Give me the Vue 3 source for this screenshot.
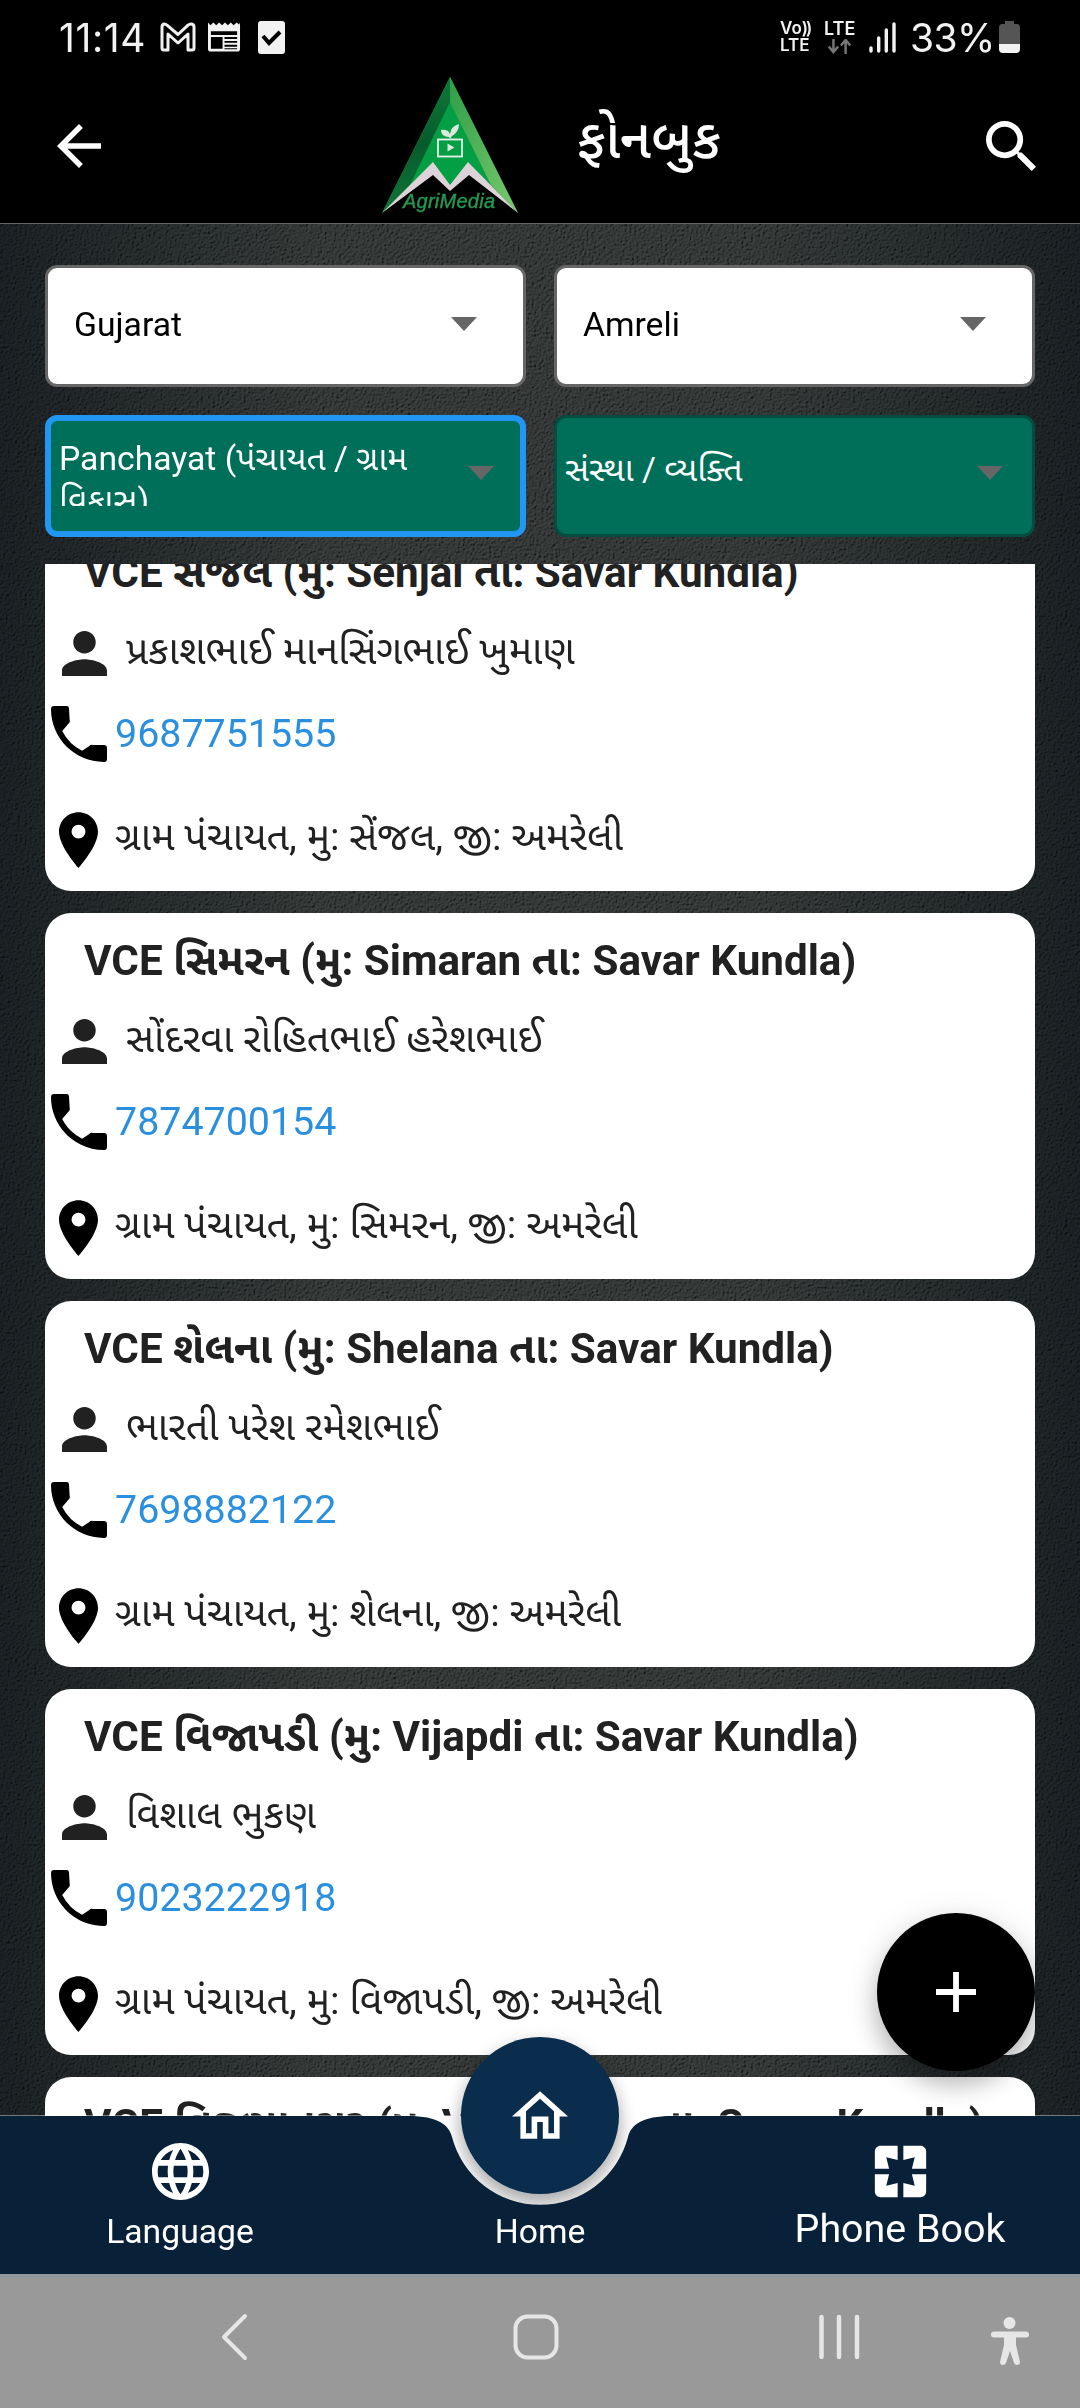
<template>
  <div class="screen">
    <header class="top">
      <div class="status">
        <span class="clock">11:14</span>
        <svg class="st-mail" viewBox="0 0 36 30"><path d="M2 4v22q0 2 2 2h4V12l10 9 10-9v16h4q2 0 2-2V5q0-3-3-3-1.500 0-3 1.200L18 12.500 7 3.200Q5.500 2 4.500 2 2 2 2 5" fill="none" stroke="#f2f2f2" stroke-width="3" stroke-linejoin="round" /></svg>
        <svg class="st-cal" viewBox="0 0 34 30"><path fill-rule="evenodd" fill="#f2f2f2" d="M0 0l2.500 3 3-3 3 3 3-3 3 3 3-3 3 3 3-3 3 3 3-3 2.500 2L33 0v27q0 3-3 3H3q-3 0-3-3zM3 9v4h27V9zM3 15v12h12V15zM17 15v2h13v-2zM17 19v2h13v-2zM17 23v2h13v-2zM17 26.500v1h13v-1z" /></svg>
        <svg class="st-check" viewBox="0 0 27 33"><rect width="27" height="33" rx="3" fill="#f2f2f2" /><path d="M5 15l6 7L22 11" fill="none" stroke="#000" stroke-width="4" /></svg>
        <div class="volte"><span>Vo<i>))</i></span><span>LTE</span></div>
        <div class="lte">
          <span>LTE</span>
          <svg viewBox="0 0 26 16"><path d="M6 0v13M1 8l5 6 5-6M19 16V2M14 7l5-6 5 6" fill="none" stroke="#777" stroke-width="2.600" /></svg>
        </div>
        <svg class="signal" viewBox="0 0 28 31"><path d="M2 26v3M9.700 16v13M17.300 8v21M25 2v27" stroke="#f2f2f2" stroke-width="3.400" stroke-linecap="round" /></svg>
        <span class="percent">33%</span>
        <svg class="battery" viewBox="0 0 21 32"><path d="M6 0h9v3h3q3 0 3 4v16H0V7q0-4 3-4h3z" fill="#555" /><path d="M0 23h21v5q0 4-4 4H4q-4 0-4-4z" fill="#f2f2f2" /></svg>
      </div>
      <div class="appbar">
        <svg class="back" viewBox="4 4 16 16"><path d="M20 11H7.830l5.590-5.590L12 4l-8 8 8 8 1.410-1.410L7.830 13H20v-2z" fill="#fff" /></svg>
        <svg class="logo" viewBox="0 0 136 136">
          <defs>
            <linearGradient id="leftFace" x1="0" y1="0" x2="0" y2="1"><stop offset="0" stop-color="#0c7a37" /><stop offset=".5" stop-color="#075b2b" /><stop offset="1" stop-color="#11763a" /></linearGradient>
            <linearGradient id="rightFace" x1="0" y1="0" x2="1" y2="1"><stop offset="0" stop-color="#2e9e48" /><stop offset="1" stop-color="#7cc96c" /></linearGradient>
          </defs>
          <path d="M68 0L0 136 51 86 68 110 86 86 136 136z" fill="#049f45" />
          <path d="M68 0L0 136 28 108 68 25z" fill="url(#leftFace)" />
          <path d="M68 0l68 136-27-28L68 25z" fill="url(#rightFace)" />
          <path d="M0 136L51 85l17 23 18-23 50 51-49-38-19 16-17-16z" fill="#ded3d8" />
          <rect x="56" y="62.500" width="24" height="17" fill="none" stroke="#e5f2e8" stroke-width="1.800" />
          <path d="M65.500 66.500v8l7-4zM67 60q-8 0-8-7 7-1 9 4 1-8 9-10 0 8-7 12l-2 3z" fill="#dce8dc" />
          <text x="21" y="131" class="logo-text" textLength="92">AgriMedia</text>
        </svg>
        <h1>ફોનબુક</h1>
        <svg class="search" viewBox="3 3 17.500 17.500"><path d="M15.500 14h-.79l-.28-.27A6.471 6.471 0 0 0 16 9.500 6.500 6.500 0 1 0 9.500 16c1.610 0 3.090-.59 4.230-1.570l.27.28v.79l5 4.990L20.490 19l-4.990-5zm-6 0C7.010 14 5 11.990 5 9.500S7.010 5 9.500 5 14 7.010 14 9.500 11.990 14 9.500 14z" fill="#fff" /></svg>
      </div>
    </header>

    <main class="content">
      <svg class="texture">
        <filter id="grain" x="0" y="0" width="100%" height="100%">
          <feTurbulence type="fractalNoise" baseFrequency=".42" numOctaves="3" seed="4" result="n" />
          <feDiffuseLighting in="n" surfaceScale="1.800" lighting-color="#fff"><feDistantLight azimuth="45" elevation="28" /></feDiffuseLighting>
        </filter>
        <rect width="100%" height="100%" filter="url(#grain)" />
      </svg>
      <div class="filters">
        <div v-for="f in filters" :key="f.label" class="select" :class="f.kind">
          <span class="value">{{ f.label }}</span>
          <i class="caret"></i>
        </div>
      </div>

      <section class="list">
        <article v-for="c in contacts" :key="c.title" class="card">
          <h2>{{ c.title }}</h2>
          <template v-if="c.name">
            <div class="row person">
              <svg viewBox="4 4 16 16"><path d="M12 12c2.210 0 4-1.790 4-4s-1.790-4-4-4-4 1.790-4 4 1.790 4 4 4zm0 2c-2.670 0-8 1.340-8 4v2h16v-2c0-2.660-5.330-4-8-4z" fill="#212121" /></svg>
              <span>{{ c.name }}</span>
            </div>
            <div class="row phone">
              <svg viewBox="3 3 18 18"><path d="M8 3H4q-1 0-1 1c0 9.390 7.610 17 17 17q1 0 1-1v-3.500q0-1-1-1h-3.600q-.7-.1-1.200.4L13 17.400A15 15 0 0 1 6.600 11L8.800 8.500q.4-.5.200-1L8.800 4q0-1-.8-1z" fill="#000" /></svg>
              <a>{{ c.phone }}</a>
            </div>
            <div class="row place">
              <svg viewBox="5 2 14 20"><path d="M12 2C8.130 2 5 5.130 5 9c0 5.250 7 13 7 13s7-7.750 7-13c0-3.870-3.130-7-7-7zm0 9.500a2.500 2.500 0 0 1 0-5 2.500 2.500 0 0 1 0 5z" fill="#000" /></svg>
              <span>{{ c.address }}</span>
            </div>
          </template>
        </article>
      </section>

      <button class="fab">
        <svg viewBox="0 0 40 40"><path d="M20 0v40M0 20h40" stroke="#fff" stroke-width="5.800" /></svg>
      </button>
    </main>

    <nav class="tabs">
      <div class="notch"></div>
      <div class="bubble">
        <svg viewBox="2 3 20 17"><path d="M12 5.690l5 4.500V18h-2v-6H9v6H7v-7.810l5-4.500M12 3L2 12h3v8h6v-6h2v6h6v-8h3L12 3z" fill="#fff" /></svg>
      </div>
      <svg class="bar" viewBox="0 0 1080 158"><path d="M0 0H408C438 0 449 9 452 21A91 91 0 0 0 628 21C631 9 642 0 672 0H1080V158H0z" fill="#082138" /></svg>
      <div class="tab">
        <svg viewBox="2 2 20 20"><path d="M11.990 2C6.470 2 2 6.480 2 12s4.470 10 9.990 10C17.520 22 22 17.520 22 12S17.520 2 11.990 2zm6.930 6h-2.950a15.650 15.650 0 0 0-1.380-3.560A8.030 8.030 0 0 1 18.920 8zM12 4.040c.83 1.200 1.480 2.530 1.910 3.960h-3.820c.43-1.430 1.080-2.760 1.910-3.960zM4.260 14C4.100 13.360 4 12.690 4 12s.1-1.360.26-2h3.380c-.08.66-.14 1.320-.14 2s.06 1.340.14 2H4.260zm.82 2h2.950c.32 1.250.78 2.450 1.380 3.560A7.987 7.987 0 0 1 5.080 16zm2.950-8H5.080a7.987 7.987 0 0 1 4.330-3.560A15.650 15.650 0 0 0 8.030 8zM12 19.960c-.83-1.200-1.480-2.530-1.910-3.960h3.820c-.43 1.430-1.080 2.760-1.910 3.960zM14.340 14H9.660c-.09-.66-.16-1.320-.16-2s.07-1.350.16-2h4.680c.09.65.16 1.320.16 2s-.07 1.340-.16 2zm.25 5.560c.6-1.110 1.060-2.310 1.380-3.560h2.950a8.030 8.030 0 0 1-4.330 3.560zM16.360 14c.08-.66.14-1.320.14-2s-.06-1.340-.14-2h3.380c.16.64.26 1.310.26 2s-.1 1.360-.26 2h-3.380z" fill="#fff" /></svg>
        <span>Language</span>
      </div>
      <div class="tab home"><span>Home</span></div>
      <div class="tab active">
        <svg viewBox="2 2 20 20"><path d="M3 5v6h5L7 7l4 1V3H5c-1.100 0-2 .9-2 2zm5 8H3v6c0 1.100.9 2 2 2h6v-5l-4 1 1-4zm9 4l-4-1v5h6c1.100 0 2-.9 2-2v-6h-5l1 4zm2-14h-6v5l4-1-1 4h5V5c0-1.100-.9-2-2-2z" fill="#fff" /></svg>
        <span>Phone Book</span>
      </div>
    </nav>

    <footer class="system">
      <svg viewBox="0 0 1080 135" fill="none" stroke="#e6e6e6" stroke-width="4" stroke-linecap="round" stroke-linejoin="round">
        <path d="M245 43L224 64l21 21" />
        <rect x="515.500" y="43.500" width="41" height="41" rx="12" />
        <path d="M821.500 44v40M839 44v40M857 44v40" stroke-width="4.500" />
        <circle cx="1009.500" cy="50" r="6" fill="#e6e6e6" stroke="none" />
        <path d="M994 61.500h32" stroke-width="6" />
        <path d="M1004 62h12v10l4 17q0 3-3 3-2 0-3-2l-4-12-4 12q-1 2-3 2-3 0-3-3l4-17z" fill="#e6e6e6" stroke="none" />
      </svg>
    </footer>
  </div>
</template>

<script setup>
const filters = [
  { label: 'Gujarat', kind: 'plain' },
  { label: 'Amreli', kind: 'plain' },
  { label: 'Panchayat (પંચાયત / ગ્રામ વિકાસ)', kind: 'green focused' },
  { label: 'સંસ્થા / વ્યક્તિ', kind: 'green' }
]

const contacts = [
  { title: 'VCE સેંજલ (મુ: Senjal તા: Savar Kundla)', name: 'પ્રકાશભાઈ માનસિંગભાઈ ખુમાણ', phone: '9687751555', address: 'ગ્રામ પંચાયત, મુ: સેંજલ, જી: અમરેલી' },
  { title: 'VCE સિમરન (મુ: Simaran તા: Savar Kundla)', name: 'સોંદરવા રોહિતભાઈ હરેશભાઈ', phone: '7874700154', address: 'ગ્રામ પંચાયત, મુ: સિમરન, જી: અમરેલી' },
  { title: 'VCE શેલના (મુ: Shelana તા: Savar Kundla)', name: 'ભારતી પરેશ રમેશભાઈ', phone: '7698882122', address: 'ગ્રામ પંચાયત, મુ: શેલના, જી: અમરેલી' },
  { title: 'VCE વિજાપડી (મુ: Vijapdi તા: Savar Kundla)', name: 'વિશાલ ભુકણ', phone: '9023222918', address: 'ગ્રામ પંચાયત, મુ: વિજાપડી, જી: અમરેલી' },
  { title: 'VCE વિજયાનગર (મુ: Vijyanagar તા: Savar Kundla)' }
]
</script>

<style>
body {
  margin: 0;
  background: #000;
}
</style>

<style scoped>
.screen {
  width: 1080px;
  height: 2408px;
  display: flex;
  flex-direction: column;
  overflow: hidden;
  font-family: Roboto, 'Noto Sans Gujarati', 'Noto Sans', sans-serif;
}

svg {
  display: block;
  flex: none;
}

.top {
  height: 223px;
  background: #000;
  color: #fff;
  box-sizing: border-box;
  flex: none;
}

/* status bar */
.status {
  height: 74px;
  padding: 0 60px 0 59px;
  display: flex;
  align-items: center;
  color: #f2f2f2;
  font-family: Inter, Roboto, sans-serif;
}

.clock {
  width: 101px;
  font-size: 39px;
  letter-spacing: 0.6px;
}

.st-mail {
  width: 36px;
  height: 30px;
}

.st-cal {
  width: 33px;
  height: 30px;
  margin-left: 12px;
}

.st-check {
  width: 27px;
  height: 33px;
  margin-left: 17px;
}

.volte {
  margin-left: auto;
  width: 44px;
  display: flex;
  flex-direction: column;
  font-size: 17px;
  font-weight: 600;
  line-height: 17px;
}

.volte i {
  font-style: normal;
  letter-spacing: -2px;
}

.lte {
  width: 45px;
  font-size: 18px;
  font-weight: 600;
  line-height: 18px;
}

.lte svg {
  width: 26px;
  height: 15px;
  margin: 1px 0 0 3px;
}

.signal {
  width: 28px;
  height: 31px;
}

.percent {
  width: 89px;
  margin-left: 13px;
  font-size: 39px;
  letter-spacing: -0.6px;
}

.battery {
  width: 21px;
  height: 32px;
}

/* app bar */
.appbar {
  height: 149px;
  display: flex;
  align-items: center;
  padding: 0 44px 0 56px;
  box-sizing: border-box;
}

.back {
  width: 46px;
  height: 44px;
  margin-top: -6px;
}

.logo {
  width: 136px;
  height: 136px;
  margin: -8px 0 0 280px;
}

.logo-text {
  font: italic 20px 'Liberation Sans', sans-serif;
  fill: #249a50;
  stroke: #249a50;
  stroke-width: 0.4px;
}

h1 {
  margin: -20px 0 0 59px;
  font-size: 54.600px;
  line-height: 70px;
  font-weight: 500;
  white-space: nowrap;
}

.search {
  width: 50px;
  height: 50px;
  margin: -6px 0 0 auto;
}

/* page body */
.content {
  height: 1893px;
  flex: none;
  position: relative;
  overflow: hidden;
  box-sizing: border-box;
  border-top: 1px solid #666;
  background:
    linear-gradient(90deg, #161b1d 0%, rgba(22, 27, 29, 0) 30%, rgba(22, 27, 29, 0) 70%, #161b1d 100%),
    #2c2f2e;
}

.content::after {
  content: '';
  position: absolute;
  left: 0;
  right: 0;
  bottom: 0;
  height: 1px;
  background: rgba(255, 255, 255, 0.4);
}

.texture {
  position: absolute;
  inset: 0;
  width: 100%;
  height: 100%;
  mix-blend-mode: overlay;
  opacity: 0.45;
}

.filters {
  position: relative;
  display: grid;
  grid-template-columns: 481px 481px;
  gap: 28px 28px;
  padding: 41px 0 0 45px;
}

.select {
  height: 122px;
  box-sizing: border-box;
  border: 3px solid #666;
  border-radius: 12px;
  background: #fff;
  display: flex;
  align-items: flex-start;
  justify-content: space-between;
  padding: 36px 46px 0 26px;
  font-size: 33.700px;
  line-height: 42px;
}

.select.green {
  background: #006f5a;
  border-color: #044b40;
  color: #fff;
  padding: 31px 29px 0 8px;
}

.select.focused {
  border: 6px solid #2196f3;
  padding: 17px 26px 0 8px;
}

.caret {
  border: 13px solid transparent;
  border-top: 14px solid #666;
  border-bottom: 0;
  margin-top: 13px;
}

.green .caret {
  margin-top: 17px;
}

.value {
  max-width: 370px;
}

.focused .value {
  height: 68px;
  overflow: hidden;
}

.focused .caret {
  margin-top: 28px;
}

.list {
  position: relative;
  margin-top: 27px;
  height: 1552px;
  padding: 0 45px;
  display: flex;
  flex-direction: column;
  justify-content: flex-start;
  gap: 22px;
  overflow: hidden;
}

.card {
  height: 366px;
  flex: none;
  border-radius: 26px;
  background: #fff;
  color: #212121;
  display: flex;
  flex-direction: column;
  white-space: nowrap;
}

/* list is scrolled: the first card starts above the viewport */
.card:first-child {
  margin-top: -39px;
}

h2 {
  margin: 0;
  padding: 18px 0 0 39px;
  font-size: 42.200px;
  line-height: 60px;
  font-weight: 700;
}

.card:last-child h2 {
  letter-spacing: 0.2px;
}

.row {
  display: flex;
  align-items: center;
  font-size: 39.400px;
  line-height: 56px;
}

.person {
  height: 70px;
  margin-top: 21px;
  padding-left: 17px;
}

.person svg {
  width: 45px;
  height: 45px;
  margin-top: -12px;
}

.person span {
  margin: -17px 0 0 19px;
}

.phone {
  height: 56px;
  margin-top: 12px;
  padding-left: 6px;
}

.phone svg {
  width: 56px;
  height: 56px;
}

.phone a {
  margin-left: 8px;
  color: #2b8fe0;
}

.place {
  height: 56px;
  margin-top: 50px;
  padding-left: 14px;
}

.place svg {
  width: 39px;
  height: 56px;
}

.place span {
  margin: -6px 0 0 17px;
}

.fab {
  position: absolute;
  right: 45px;
  top: 1689px;
  width: 158px;
  height: 158px;
  border: 0;
  padding: 0;
  border-radius: 50%;
  background: #000;
  display: grid;
  place-items: center;
  box-shadow: 0 14px 24px rgba(0, 0, 0, 0.24), 0 4px 36px rgba(0, 0, 0, 0.1);
}

.fab svg {
  width: 40px;
  height: 40px;
}

/* bottom tabs */
.tabs {
  height: 157px;
  flex: none;
  position: relative;
  display: flex;
}

.bar {
  position: absolute;
  left: 0;
  top: 0;
  width: 1080px;
  height: 158px;
}

.notch {
  position: absolute;
  left: 400px;
  top: 0;
  width: 280px;
  height: 100px;
  background: #fff;
}

.bubble {
  position: absolute;
  left: 461px;
  top: -79px;
  width: 158px;
  height: 157px;
  border-radius: 50%;
  background: #0b2d4d;
  display: grid;
  place-items: center;
  box-shadow: 0 10px 18px rgba(0, 0, 0, 0.3), 0 2px 20px rgba(0, 0, 0, 0.08);
}

.bubble svg {
  width: 56px;
  height: 48px;
  margin-top: -2px;
}

.tab {
  position: relative;
  flex: 1;
  display: flex;
  flex-direction: column;
  align-items: center;
  padding-top: 27px;
  color: #fff;
  font-size: 33.700px;
  line-height: 40px;
}

.tab svg {
  width: 57px;
  height: 57px;
}

.tab span {
  margin-top: 12px;
}

.tab.home span {
  margin-top: 69px;
}

.tab.active {
  font-size: 39.400px;
}

.tab.active span {
  margin-top: 9px;
}

.system {
  height: 135px;
  flex: none;
  box-sizing: border-box;
  border-top: 5px solid #8f979f;
  background: #999;
}

.system svg {
  width: 1080px;
  height: 135px;
  margin-top: -5px;
}
</style>
